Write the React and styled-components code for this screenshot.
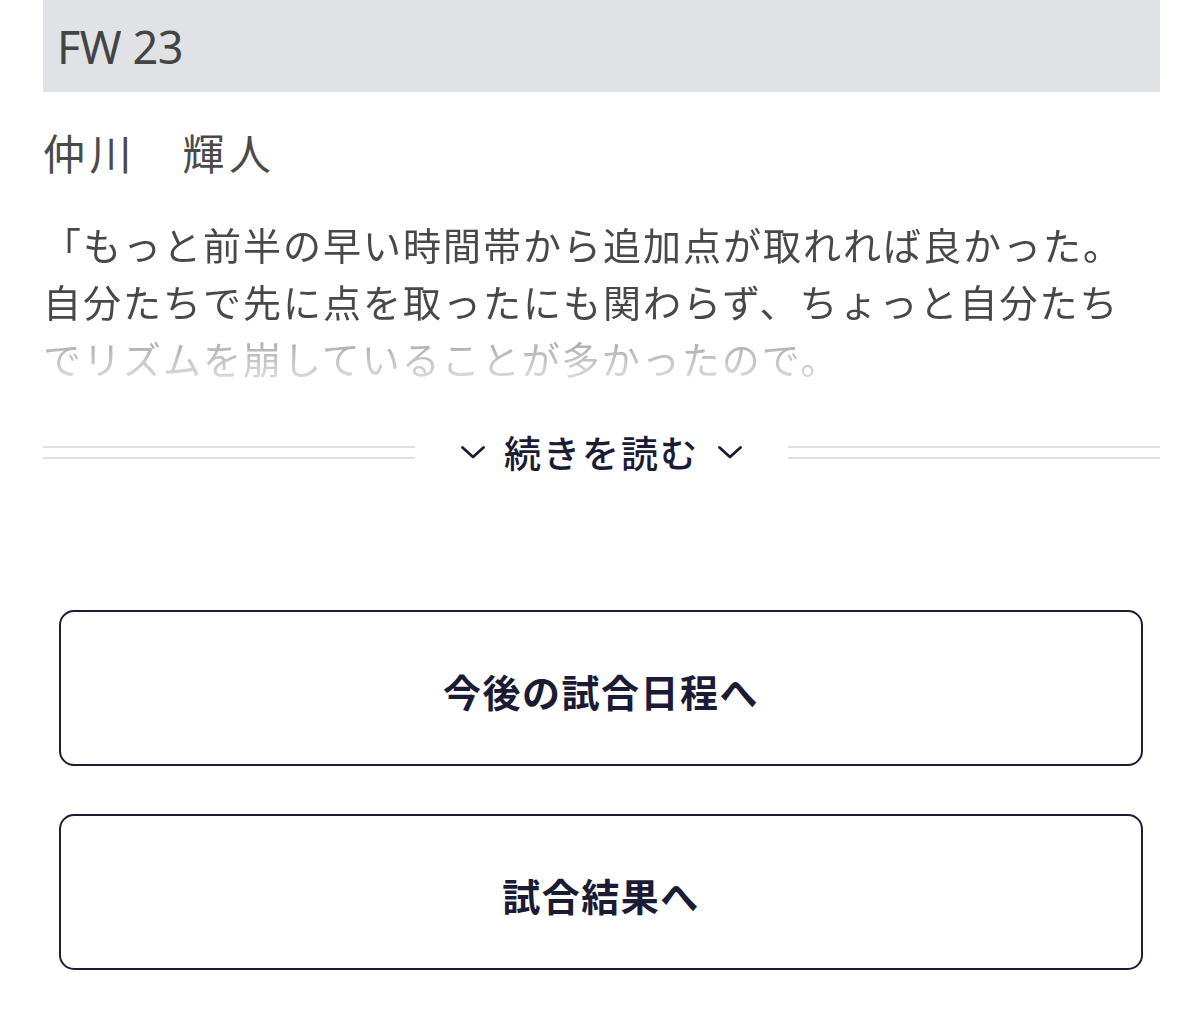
import React from "react";
import styled, { createGlobalStyle } from "styled-components";

const GlobalStyle = createGlobalStyle`
  body {
    margin: 0;
    background: #ffffff;
    font-family: "Noto Sans", "Noto Sans CJK JP", sans-serif;
  }
`;

const Page = styled.div`
  padding: 0 40px 60px 43px;
`;

const PositionBar = styled.div`
  height: 92px;
  background: #e1e2e6;
  display: flex;
  align-items: center;
  padding-left: 14px;
  font-family: "Noto Sans", "Noto Sans CJK JP", sans-serif;
  font-size: 45px;
  color: #444444;
  letter-spacing: -0.5px;
`;

const PlayerName = styled.div`
  margin-top: 30px;
  font-family: "Noto Sans CJK JP", sans-serif;
  font-size: 42px;
  font-weight: 400;
  line-height: 60px;
  letter-spacing: 4.5px;
  color: #4a4a4a;
`;

const Comment = styled.p`
  margin: 33px 0 0;
  padding-right: 20px;
  font-family: "Noto Sans CJK JP", sans-serif;
  font-size: 38px;
  line-height: 57px;
  letter-spacing: 2px;
  color: #484848;
  height: 171px;
  overflow: hidden;
  -webkit-mask-image: linear-gradient(
    to bottom,
    #000 62%,
    rgba(0, 0, 0, 0.5) 69%,
    rgba(0, 0, 0, 0.15) 100%
  );
  mask-image: linear-gradient(
    to bottom,
    #000 62%,
    rgba(0, 0, 0, 0.5) 69%,
    rgba(0, 0, 0, 0.15) 100%
  );
`;

const MoreRow = styled.div`
  margin-top: 41px;
  display: flex;
  align-items: center;
`;

const DoubleRule = styled.div`
  flex: 1;
  height: 9px;
  border-top: 2px solid #dfe0e4;
  border-bottom: 2px solid #dfe0e4;
`;

const MoreButton = styled.button`
  display: flex;
  align-items: center;
  gap: 19px;
  margin: 0 46px;
  padding: 0;
  border: none;
  background: none;
  cursor: pointer;
  font-family: "Noto Sans CJK JP", sans-serif;
  font-size: 37px;
  font-weight: 500;
  letter-spacing: 2px;
  line-height: 50px;
  color: #1b1b35;
`;

const Chevron = styled.svg`
  width: 24px;
  height: 13px;
  flex-shrink: 0;
`;

const LinkList = styled.div`
  margin: 133px 17px 0 16px;
  display: flex;
  flex-direction: column;
  gap: 48px;
`;

const LinkButton = styled.a`
  display: flex;
  align-items: center;
  justify-content: center;
  height: 156px;
  box-sizing: border-box;
  border: 2px solid #1e1d38;
  border-radius: 15px;
  font-family: "Noto Sans CJK JP", sans-serif;
  font-size: 38px;
  font-weight: 700;
  letter-spacing: 1.5px;
  color: #1b1b35;
  text-decoration: none;
  padding-top: 4px;
`;

function ChevronDown() {
  return (
    <Chevron viewBox="0 0 24 13">
      <polyline
        points="1.5,1.5 12,11 22.5,1.5"
        fill="none"
        stroke="#1b1b35"
        strokeWidth="2.8"
        strokeLinecap="round"
        strokeLinejoin="round"
      />
    </Chevron>
  );
}

const comment =
  "「もっと前半の早い時間帯から追加点が取れれば良かった。自分たちで先に点を取ったにも関わらず、ちょっと自分たちでリズムを崩していることが多かったので。";

function App() {
  return (
    <>
      <GlobalStyle />
      <Page>
        <PositionBar>FW 23</PositionBar>
        <PlayerName>仲川　輝人</PlayerName>
        <Comment>{comment}</Comment>
        <MoreRow>
          <DoubleRule />
          <MoreButton type="button">
            <ChevronDown />
            続きを読む
            <ChevronDown />
          </MoreButton>
          <DoubleRule />
        </MoreRow>
        <LinkList>
          <LinkButton href="#">今後の試合日程へ</LinkButton>
          <LinkButton href="#">試合結果へ</LinkButton>
        </LinkList>
      </Page>
    </>
  );
}

export default App;
